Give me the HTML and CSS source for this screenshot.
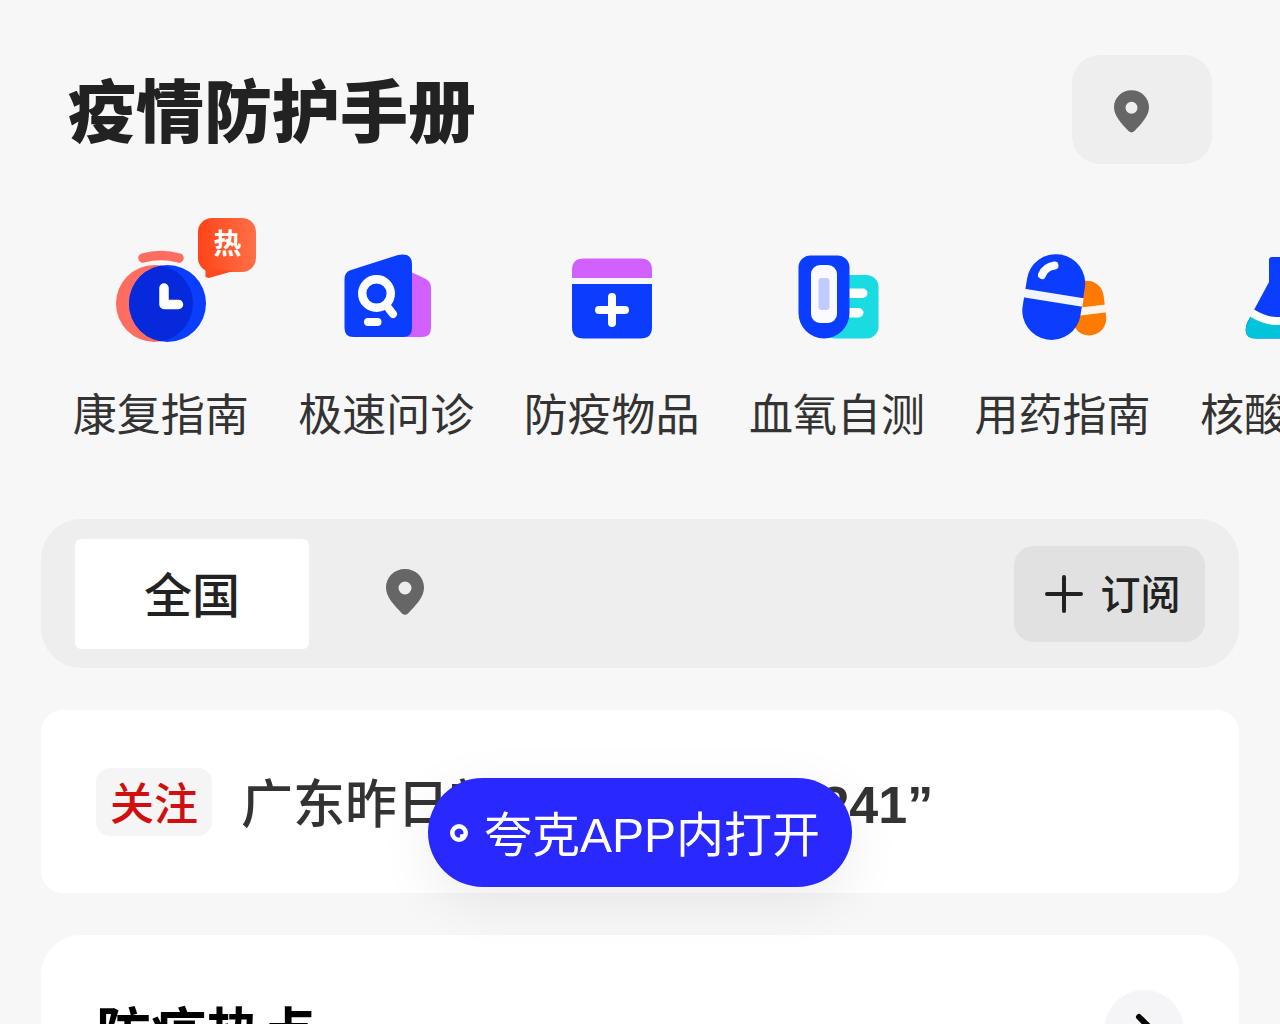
FILE: index.html
```html
<!DOCTYPE html>
<html lang="zh-CN">
<head>
    <meta charset="UTF-8">
    <meta name="viewport" content="width=device-width, initial-scale=1.0">
    <title>疫情防护手册</title>
    <link rel="stylesheet" href="styles.css">
</head>
<body>
    <header class="header">
        <h1>疫情防护手册</h1>
        <button type="button" class="location-btn" aria-label="选择城市">
            <svg class="pin" viewBox="0 0 38 46"><path fill-rule="evenodd" d="M19 0C8.500 0 0 8 0 18.500C0 28 8 36 16 44.500Q19 47 22 44.500C30 36 38 28 38 18.500C38 8 29.500 0 19 0ZM19 12.500A6.500 6.500 0 1 1 19 25.500A6.500 6.500 0 1 1 19 12.500Z"/></svg>
        </button>
    </header>

    <nav class="tools">
        <a href="#" class="tool">
            <svg viewBox="0 0 100 100">
                <defs><clipPath id="clockClip"><circle cx="56.500" cy="56.500" r="38.500"/></clipPath></defs>
                <path d="M32 11Q50 6 68 11" fill="none" stroke="#ff6d60" stroke-width="9.500" stroke-linecap="round"/>
                <circle cx="43.500" cy="56.500" r="38.500" fill="#ff6d60"/>
                <circle cx="56.500" cy="56.500" r="38.500" fill="#0b3dff"/>
                <circle cx="43.500" cy="56.500" r="38.500" fill="#0729dc" clip-path="url(#clockClip)"/>
                <path d="M53 41V57.500H67.500" fill="none" stroke="#fff" stroke-width="9.500" stroke-linecap="round" stroke-linejoin="round"/>
            </svg>
            <span class="tool-name">康复指南</span>
            <span class="hot">热</span>
        </a>
        <a href="#" class="tool">
            <svg viewBox="0 0 100 100">
                <path d="M66 23L76 25.500L88 31Q95 34 95 41V81Q95 90 86 90H60Z" fill="#d160ff"/>
                <path d="M8.500 32Q8.500 25 15 23L62 8Q76 5 76 17V81Q76 90 67 90H17.500Q8.500 90 8.500 81Z" fill="#0b3dff"/>
                <circle cx="40.500" cy="46.500" r="14.300" fill="none" stroke="#fff" stroke-width="8.400"/>
                <path d="M50 58L57 67" stroke="#fff" stroke-width="8" stroke-linecap="round"/>
                <rect x="28" y="71" width="17.500" height="8" rx="4" fill="#fff"/>
            </svg>
            <span class="tool-name">极速问诊</span>
        </a>
        <a href="#" class="tool">
            <svg viewBox="0 0 100 100">
                <path d="M10 31V23Q10 11.500 21.500 11.500H78.500Q90 11.500 90 23V31Z" fill="#d160ff"/>
                <path d="M10 37H90V80Q90 91.500 78.500 91.500H21.500Q10 91.500 10 80Z" fill="#0b3dff"/>
                <path d="M50 50V76M37 63H63" stroke="#fff" stroke-width="8" stroke-linecap="round"/>
            </svg>
            <span class="tool-name">防疫物品</span>
        </a>
        <a href="#" class="tool">
            <svg viewBox="0 0 100 100">
                <rect x="36" y="28" width="55.500" height="63.500" rx="12" fill="#1bdbe2"/>
                <rect x="50" y="41.500" width="30.500" height="9.500" rx="4.700" fill="#fff"/>
                <rect x="50" y="61" width="26.500" height="9.500" rx="4.700" fill="#fff"/>
                <path d="M11.500 20A12 12 0 0 1 23.500 8.500H50.500A12 12 0 0 1 62.500 20V66A25.500 25.500 0 0 1 11.500 66Z" fill="#0b3dff"/>
                <rect x="24" y="18" width="26" height="58" rx="9" fill="#fbfbff"/>
                <rect x="31.500" y="31" width="11" height="32" rx="3" fill="#c1cbff"/>
            </svg>
            <span class="tool-name">血氧自测</span>
        </a>
        <a href="#" class="tool">
            <svg viewBox="0 0 100 100">
                <g transform="rotate(-7 75.500 61)">
                    <rect x="58" y="33.500" width="34" height="55" rx="17" fill="#ff7a00"/>
                    <rect x="57" y="59.500" width="36" height="8" fill="#fff4ea"/>
                </g>
                <g transform="rotate(9 40.500 50)">
                    <rect x="11.500" y="7" width="58.500" height="86" rx="29" fill="#0b3dff"/>
                    <rect x="10.500" y="46.500" width="60" height="8.500" fill="#f2f5ff"/>
                </g>
                <path d="M29 28Q32 20 41.500 18.500" fill="none" stroke="#fff" stroke-width="8" stroke-linecap="round"/>
            </svg>
            <span class="tool-name">用药指南</span>
        </a>
        <a href="#" class="tool">
            <svg viewBox="0 0 100 100">
                <path d="M34 10H66Q69 10 69 13V35L90 74Q96 91.500 82 91.500H18Q4 91.500 9 76L31 35V13Q31 10 34 10Z" fill="#0b3dff"/>
                <path d="M13 69Q28 78 41 78Q56 77 66 72Q78 67 88 70L91 76Q96 91.500 82 91.500H18Q4 91.500 9 77Z" fill="#00c4d9"/>
                <path d="M14 66Q29 75 41 74Q54 73 64 68Q76 63 87 66" fill="none" stroke="#fff" stroke-width="8"/>
            </svg>
            <span class="tool-name">核酸检测</span>
        </a>
    </nav>

    <main>
        <section class="area-bar">
            <div class="tabs">
                <button type="button" class="tab active">全国</button>
                <button type="button" class="tab tab-local" aria-label="当前城市">
                    <svg class="pin" viewBox="0 0 38 46"><path fill-rule="evenodd" d="M19 0C8.500 0 0 8 0 18.500C0 28 8 36 16 44.500Q19 47 22 44.500C30 36 38 28 38 18.500C38 8 29.500 0 19 0ZM19 12.500A6.500 6.500 0 1 1 19 25.500A6.500 6.500 0 1 1 19 12.500Z"/></svg>
                </button>
            </div>
            <button type="button" class="subscribe">
                <svg viewBox="0 0 38 38"><path d="M19 2V36M2 19H36"/></svg>
                <span>订阅</span>
            </button>
        </section>

        <section class="card notice">
            <span class="tag">关注</span>
            <a href="#" class="headline">广东昨日新增本土“<b>249+6241”</b></a>
        </section>

        <section class="card topics">
            <h2>防疫热点</h2>
            <button type="button" class="more" aria-label="更多">
                <svg viewBox="0 0 40 40"><path d="M15 7L28 20L15 33"/></svg>
            </button>
        </section>
    </main>

    <a href="#" class="open-app">
        <svg viewBox="0 0 18 18"><path fill-rule="evenodd" d="M9 0A9 9 0 1 1 9 18A9 9 0 1 1 9 0ZM9 4.500A4.500 4.500 0 1 0 10 13.400L10 10.500L13.400 10A4.500 4.500 0 0 0 9 4.500Z"/></svg>
        <span>夸克APP内打开</span>
    </a>
</body>
</html>
```

FILE: styles.css
```css
* {
    box-sizing: border-box;
}

body {
    margin: 0;
    height: 100vh;
    overflow: hidden;
    background: #f7f7f7;
    color: #222;
    font-family: "Liberation Sans", "Noto Sans CJK SC", sans-serif;
}

a {
    color: inherit;
    text-decoration: none;
}

button {
    padding: 0;
    border: none;
    background: none;
    color: inherit;
    font-family: inherit;
    cursor: pointer;
}

.pin {
    width: 38px;
    height: 46px;
    fill: #666;
}

/* header */
.header {
    display: flex;
    align-items: center;
    justify-content: space-between;
    padding: 55px 68px 0;
}

h1 {
    margin: 0;
    padding-top: 6px;
    font-size: 68px;
    line-height: 102px;
    font-weight: 900;
}

.location-btn {
    display: flex;
    align-items: center;
    width: 140px;
    height: 109px;
    padding: 4px 0 0 42px;
    border-radius: 28px;
    background: #eee;
}

.location-btn .pin {
    width: 35px;
    height: 43px;
}

/* tools */
.tools {
    display: flex;
    margin-top: 83px;
    padding-left: 48px;
}

.tool {
    position: relative;
    display: flex;
    flex: 0 0 18.3%;
    flex-direction: column;
    align-items: center;
    gap: 39px;
}

.tool svg {
    width: 100px;
    height: 100px;
}

.tool-name {
    font-size: 44px;
    line-height: 60px;
    color: #333;
    white-space: nowrap;
}

.hot {
    position: absolute;
    top: -29px;
    right: 17px;
    width: 58px;
    height: 54px;
    border-radius: 14px;
    background: linear-gradient(90deg, #ff4418, #ff7048);
    color: #fff;
    font-size: 28px;
    font-weight: 700;
    line-height: 54px;
    text-align: center;
}

.hot::after {
    content: "";
    position: absolute;
    left: 7px;
    bottom: -6px;
    width: 28px;
    height: 10px;
    background: #ff4a1e;
    clip-path: polygon(0 0, 100% 30%, 12% 100%, 0 90%);
}

/* area bar */
main {
    padding: 0 41px;
}

.area-bar {
    display: flex;
    align-items: center;
    justify-content: space-between;
    height: 149px;
    margin-top: 73px;
    padding: 0 34px;
    border-radius: 40px;
    background: #eee;
}

.tabs {
    display: flex;
}

.tab {
    width: 234px;
    height: 110px;
    padding-bottom: 4px;
    border-radius: 6px;
    font-size: 48px;
    font-weight: 500;
}

.tab.active {
    background: #fff;
}

.tab-local {
    display: flex;
    align-items: center;
    padding-left: 77px;
}

.subscribe {
    display: flex;
    align-items: center;
    justify-content: center;
    gap: 18px;
    width: 191px;
    height: 96px;
    padding-left: 6px;
    border-radius: 20px;
    background: #e1e1e1;
    font-size: 40px;
    font-weight: 500;
}

.subscribe span {
    padding-bottom: 4px;
}

.subscribe svg {
    width: 38px;
    height: 38px;
    stroke: #222;
    stroke-width: 4;
    stroke-linecap: round;
}

/* cards */
.card {
    display: flex;
    align-items: center;
    margin-top: 42px;
    background: #fff;
}

.notice {
    height: 183px;
    padding: 0 55px;
    border-radius: 22px;
}

.tag {
    padding: 6px 14px 0;
    border-radius: 14px;
    background: #f5f5f5;
    color: #d01010;
    font-size: 44px;
    font-weight: 500;
    line-height: 62px;
}

.headline {
    margin-left: 29px;
    padding-top: 6px;
    color: #333;
    font-size: 52px;
    font-weight: 500;
    line-height: 72px;
    white-space: nowrap;
}

.topics {
    align-items: flex-start;
    justify-content: space-between;
    height: 400px;
    padding: 55px 55px 0;
    border-radius: 40px;
}

h2 {
    margin: 0;
    color: #000;
    font-size: 55px;
    line-height: 88px;
}

.more {
    width: 80px;
    height: 80px;
    border-radius: 50%;
    background: #f5f5f7;
}

.more svg {
    display: block;
    width: 40px;
    height: 40px;
    margin: 0 auto;
    fill: none;
    stroke: #000;
    stroke-width: 6;
    stroke-linecap: round;
    stroke-linejoin: round;
}

/* floating button */
.open-app {
    position: fixed;
    left: 50%;
    bottom: 137px;
    display: flex;
    align-items: center;
    gap: 16px;
    width: 424px;
    height: 109px;
    padding-left: 22px;
    border-radius: 55px;
    background: #2828ff;
    box-shadow: 0 14px 54px rgba(0, 0, 0, 0.08);
    color: #fff;
    font-size: 48px;
    white-space: nowrap;
    transform: translateX(-50%);
}

.open-app span {
    padding-bottom: 4px;
}

.open-app svg {
    width: 18px;
    height: 18px;
    fill: #fff;
}
```
